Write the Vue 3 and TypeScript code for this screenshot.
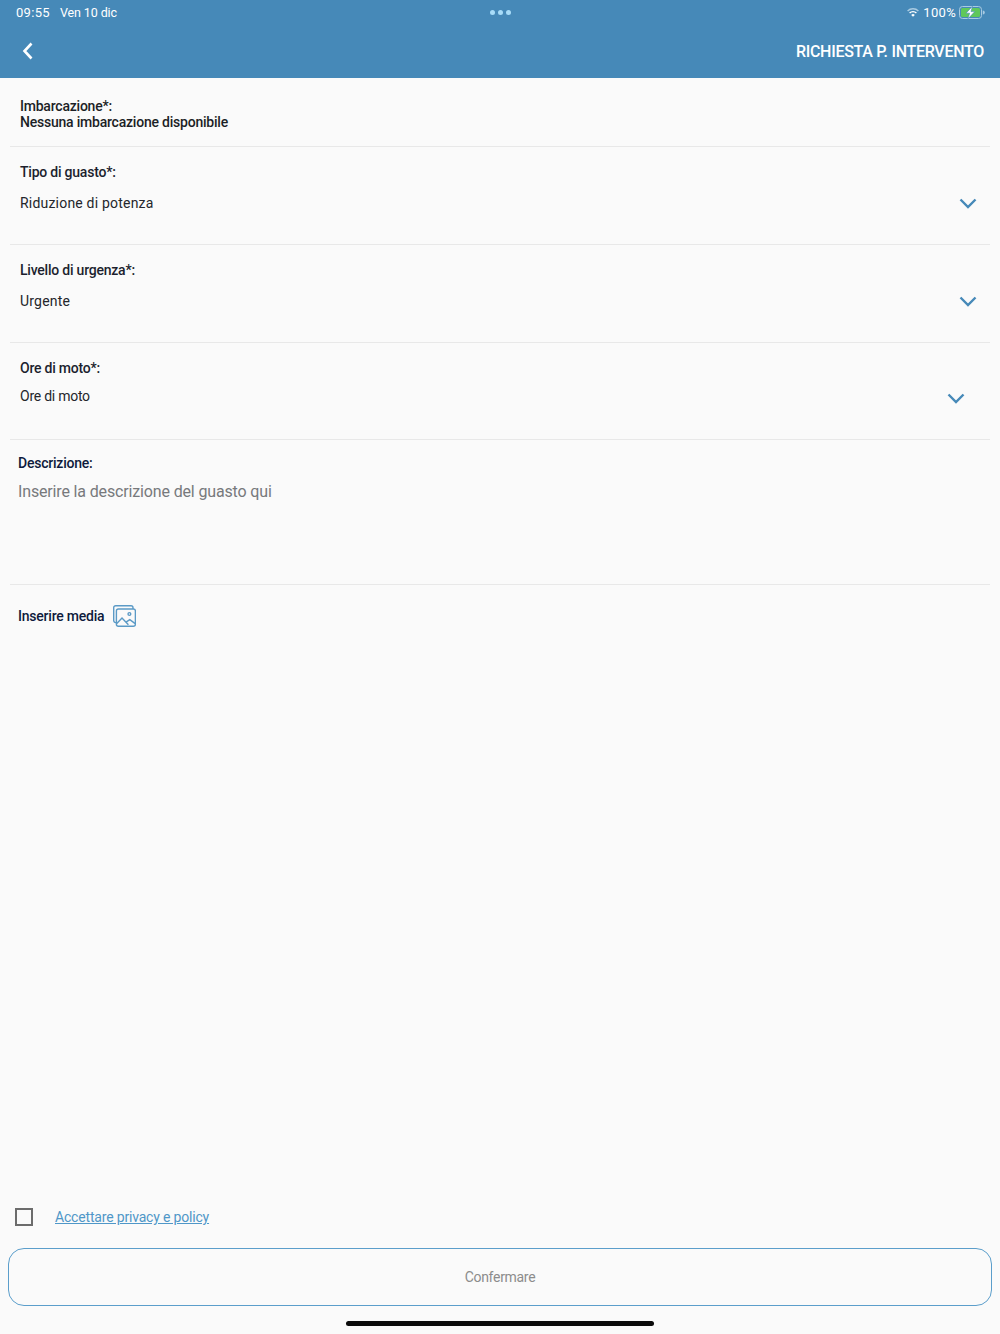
<script setup lang="ts">
interface SelectRow {
  label: string
  value: string
  compact?: boolean
}

const selects: SelectRow[] = [
  { label: 'Tipo di guasto*:', value: 'Riduzione di potenza' },
  { label: 'Livello di urgenza*:', value: 'Urgente' },
  { label: 'Ore di moto*:', value: 'Ore di moto', compact: true },
]
</script>

<template>
  <div class="page">
    <header class="header">
      <div class="status">
        <div class="status-left">
          <span>09:55</span>
          <span class="date">Ven 10 dic</span>
        </div>
        <div class="dots"><i></i><i></i><i></i></div>
        <div class="status-right">
          <svg class="wifi" width="12" height="9" viewBox="0 0 12 9">
            <path d="M0.6 3 A7.6 7.6 0 0 1 11.4 3" fill="none" stroke="#a9cbe2" stroke-width="1.4" />
            <path d="M2.6 5 A4.8 4.8 0 0 1 9.4 5" fill="none" stroke="#fff" stroke-width="1.4" />
            <path d="M4.2 7 L6 8.8 L7.8 7 A2.5 2.5 0 0 0 4.2 7 Z" fill="#fff" />
          </svg>
          <span>100%</span>
          <svg class="battery" width="26" height="13" viewBox="0 0 26 13">
            <rect x="0.5" y="0.5" width="22" height="12" rx="3" fill="none" stroke="#a9cbe2" />
            <rect x="2" y="2" width="19" height="9" rx="1.5" fill="#5fc85a" />
            <path d="M23.8 4.5 a2 2 0 0 1 0 4 Z" fill="#a9cbe2" />
            <path d="M13.5 0.2 L7 7.2 H10.6 L9 12.8 L15.8 5.6 H12 Z" fill="#fff" stroke="#4689b8" stroke-width="0.6" />
          </svg>
        </div>
      </div>
      <div class="nav">
        <svg class="back" width="12" height="18" viewBox="0 0 12 18">
          <path d="M9.5 1.5 L2.5 9 L9.5 16.5" fill="none" stroke="#fff" stroke-width="2.6" />
        </svg>
        <h1>RICHIESTA P. INTERVENTO</h1>
      </div>
    </header>

    <main class="form">
      <section class="boat">
        <div>Imbarcazione*:</div>
        <div>Nessuna imbarcazione disponibile</div>
      </section>

      <section v-for="row in selects" :key="row.label" class="select" :class="{ compact: row.compact }">
        <div class="label">{{ row.label }}</div>
        <div class="field">
          <span>{{ row.value }}</span>
          <svg width="18" height="11" viewBox="0 0 18 11">
            <path d="M1.5 1.5 L9 9 L16.5 1.5" fill="none" stroke="#4689b8" stroke-width="2.4" />
          </svg>
        </div>
      </section>

      <section class="description">
        <div class="label">Descrizione:</div>
        <div class="placeholder">Inserire la descrizione del guasto qui</div>
      </section>

      <section class="media">
        <span class="label">Inserire media</span>
        <svg width="23" height="22" viewBox="0 0 23 22" fill="none" stroke="#5b9ac6" stroke-width="1.4">
          <path d="M3.4 17.6 H2.7 A2 2 0 0 1 0.7 15.6 V2.7 A2 2 0 0 1 2.7 0.7 H18 A2 2 0 0 1 20 2.7 V4" />
          <rect x="3.4" y="4" width="19" height="17.2" rx="2" />
          <circle cx="16.4" cy="9" r="1.4" />
          <path d="M3.8 18.4 L9 13 L15.4 19.8 M13 17.2 L16.8 14.6 L22.2 18.6" />
        </svg>
      </section>

      <div class="spacer"></div>

      <label class="privacy">
        <span class="check"></span>
        <a>Accettare privacy e policy</a>
      </label>

      <button class="confirm" type="button" disabled>Confermare</button>
      <div class="home-indicator"></div>
    </main>
  </div>
</template>

<style>
body { margin: 0; background: #fafafa; }
</style>

<style scoped>
.page {
  width: 1000px; height: 1334px; display: flex; flex-direction: column;
  background: #fafafa; font-family: Roboto, "Liberation Sans", sans-serif; overflow: hidden;
}
.header { height: 78px; background: #4689b8; color: #fff; flex: none; }
.status {
  height: 24px; padding: 0 15px 0 16px; display: grid; grid-template-columns: 1fr auto 1fr;
  align-items: center; font-size: 13px; letter-spacing: 0.3px;
}
.status-left { display: flex; gap: 10px; }
.date { letter-spacing: -0.1px; font-size: 12.5px; }
.status-right { display: flex; justify-content: flex-end; align-items: center; gap: 3px; }
.wifi { margin-right: 1px; }
.dots { display: flex; gap: 3px; }
.dots i { width: 5px; height: 5px; border-radius: 50%; background: #a8dcf8; }
.nav { height: 54px; padding: 0 16px 0 22px; display: flex; align-items: center; justify-content: space-between; }
.nav h1 { margin: 0; font-size: 16px; font-weight: 500; letter-spacing: -0.28px; }
.form { flex: 1; display: flex; flex-direction: column; min-height: 0; }
.boat, .select, .description { margin: 0 10px; border-bottom: 1px solid #e8e8e8; }
.boat {
  height: 69px; box-sizing: border-box; padding: 20px 10px 0; font-size: 14px; font-weight: 500;
  letter-spacing: -0.22px; line-height: 16px; color: #1c1f26;
}
.label { font-size: 14px; font-weight: 500; letter-spacing: -0.22px; color: #0e1a3c; line-height: 16px; }
.select { height: 98px; box-sizing: border-box; padding: 17px 10px 0; }
.select.compact { height: 97px; }
.select .label { color: #1c1f2e; }
.field {
  margin-top: 15px; display: flex; align-items: center; justify-content: space-between;
  font-size: 14px; letter-spacing: 0.2px; color: #24262b; line-height: 17px; padding-right: 3px;
}
.select.compact .field { padding-right: 15px; margin-top: 12px; letter-spacing: -0.25px; }
.select.compact .field svg { position: relative; top: 2px; }
.description { height: 145px; box-sizing: border-box; padding: 15px 8px 0; }
.placeholder { margin-top: 11px; font-size: 16px; letter-spacing: -0.15px; color: #77797c; line-height: 20px; }
.media { display: flex; align-items: center; gap: 9px; padding: 20px 18px 0; height: 21px; }
.spacer { flex: 1; }
.privacy { display: flex; align-items: center; gap: 22px; padding: 0 15px; height: 20px; }
.check { width: 14px; height: 14px; border: 2px solid #6c6c6c; flex: none; }
.privacy a { font-size: 14px; letter-spacing: -0.18px; color: #4f97c8; text-decoration: underline; }
.confirm {
  margin: 21px 8px 0; height: 58px; flex: none; background: transparent; border: 1.5px solid #5b9ecb;
  border-radius: 16px; color: #8c8c8c; font: 400 14px Roboto, "Liberation Sans", sans-serif; letter-spacing: -0.3px;
}
.home-indicator { width: 308px; height: 5px; margin: 15px auto 8px; border-radius: 3px; background: #0b0b0b; flex: none; }
</style>
